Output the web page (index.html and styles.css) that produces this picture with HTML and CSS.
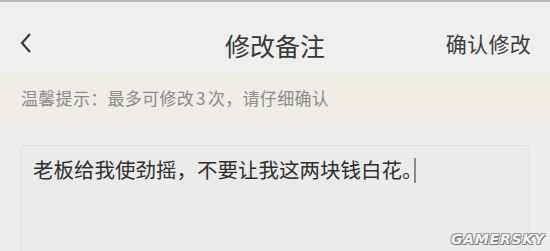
FILE: index.html
```html
<html>
<head>
<meta charset="utf-8">
<title>修改备注</title>
<link rel="stylesheet" href="styles.css">
</head>
<body>
<div class="page">
  <div class="topline"></div>
  <div class="header">
    <div class="back">
      <svg width="14" height="22" viewBox="0 0 14 22"><path d="M11 2 L3 11 L11 20" fill="none" stroke="#3a3a3a" stroke-width="2.2"/></svg>
    </div>
    <div class="title">修改备注</div>
    <div class="confirm">确认修改</div>
  </div>
  <div class="tips">温馨提示：最多可修改 3 次，请仔细确认</div>
  <div class="editor">
    <div class="note">老板给我使劲摇，不要让我这两块钱白花。<span class="caret"></span></div>
  </div>
  <div class="mark">GAMERSKY</div>
</div>
</body>
</html>
```

FILE: styles.css
```css
body{margin:0;
background:#eeeeee;
font-family:"Noto Sans CJK SC","Noto Sans",sans-serif;}
.page{position:relative;
width:550px;
height:251px;
overflow:hidden;
background:#eeeeee;}
.topline{height:2px;
background:#b8b8b8;}
.header{height:58px;
padding-top:12px;
display:flex;
align-items:center;
justify-content:space-between;
padding-left:19px;
padding-right:19px;
background:#efefef;
position:relative;}
.back{width:14px;height:22px;display:flex;}
.title{position:absolute;
left:0;right:0;
text-align:center;
font-size:25px;
line-height:30px;
top:28px;
color:#383838;}
.confirm{font-size:21px;
line-height:26px;
color:#3c3c3c;
letter-spacing:0.3px;}
.tips{height:52px;
line-height:52px;
padding-left:21px;
background:#efede5;
color:#8b8b8b;
font-size:17px;
letter-spacing:0.3px;
word-spacing:-2px;}
.editor{margin:21px 20px 0 20px;
height:120px;
border:1px solid #e1e1e1;
border-radius:4px;
background:#ebebeb;
padding:10px 12px;}
.note{font-size:20.5px;
line-height:26px;
color:#2e2e2e;}
.caret{display:inline-block;
width:2px;
height:25px;
background:#8a8a8a;
vertical-align:-5px;
margin-left:-9px;}
.mark{position:absolute;
right:5px;
bottom:4px;
font-family:"DejaVu Sans",sans-serif;
font-weight:bold;
font-style:italic;
font-size:14px;
letter-spacing:0.8px;
color:#f4f4f4;
text-shadow:1px 1px 0 #777,-1px -1px 0 #999,1px -1px 0 #999,-1px 1px 0 #999;}
```
